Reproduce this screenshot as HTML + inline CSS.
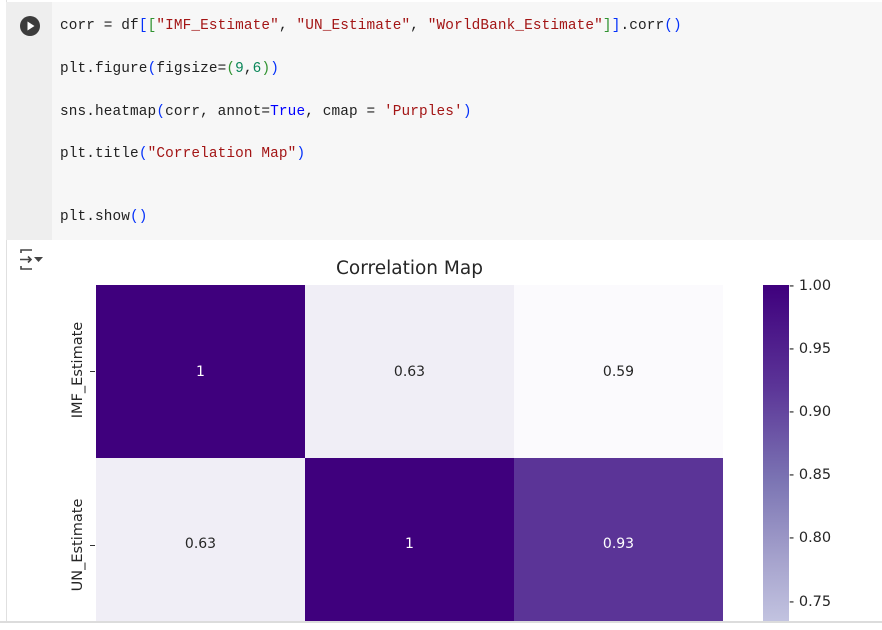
<!DOCTYPE html>
<html><head><style>
body{margin:0;width:882px;height:630px;background:#fff;position:relative;overflow:hidden;font-family:"Liberation Sans",sans-serif}
.code{position:absolute;left:6px;top:2px;width:876px;height:238px;background:#f7f7f7}
.gut{position:absolute;left:6px;top:2px;width:46px;height:238px;background:#eeeeee}
.ln{position:absolute;left:60px;font-family:"Liberation Mono",monospace;font-size:14.4px;letter-spacing:0.12px;color:#212121;white-space:pre}
.s{color:#a31515}.b{color:#0431fa}.g{color:#319331}.k{color:#0000ff}.n{color:#098658}
.a{position:absolute;font-family:"DejaVu Sans",sans-serif;font-size:14px;color:#262626}
.c{position:absolute;display:flex;align-items:center;justify-content:center;font-family:"DejaVu Sans",sans-serif;font-size:14px;box-sizing:border-box}
.r2{align-items:flex-start;padding-top:78px;line-height:17px}
</style></head><body>
<div style="position:absolute;left:6px;top:0;width:1px;height:622px;background:#e0e0e0"></div>
<div class="code"></div><div class="gut"></div>
<svg style="position:absolute;left:19px;top:15px" width="22" height="22"><circle cx="11" cy="11" r="10" fill="#3c3c3c"/><path d="M8.5 6.5 L15.5 11 L8.5 15.5Z" fill="#fff"/></svg>
<div class="ln" style="top:18px">corr = df<span class="b">[</span><span class="g">[</span><span class="s">"IMF_Estimate"</span>, <span class="s">"UN_Estimate"</span>, <span class="s">"WorldBank_Estimate"</span><span class="g">]</span><span class="b">]</span>.corr<span class="b">()</span></div>
<div class="ln" style="top:61px">plt.figure<span class="b">(</span>figsize=<span class="g">(</span><span class="n">9</span>,<span class="n">6</span><span class="g">)</span><span class="b">)</span></div>
<div class="ln" style="top:104px">sns.heatmap<span class="b">(</span>corr, annot=<span class="k">True</span>, cmap = <span class="s">'Purples'</span><span class="b">)</span></div>
<div class="ln" style="top:146px">plt.title<span class="b">(</span><span class="s">"Correlation Map"</span><span class="b">)</span></div>
<div class="ln" style="top:209px">plt.show<span class="b">()</span></div>
<svg style="position:absolute;left:19px;top:249px" width="26" height="22" fill="none" stroke="#444" stroke-width="1.6"><path d="M2 4 V1 H13 M2 17 V20 H13 M1 10.5 H12 M9 7.5 L12 10.5 L9 13.5"/><path d="M15 8 H24 L19.5 13Z" fill="#444" stroke="none"/></svg>
<div class="a" style="left:336px;top:258px;font-size:18.5px">Correlation Map</div>
<div class="c" style="left:96px;top:285px;width:209px;height:173px;background:#3f007d;color:#fff">1</div>
<div class="c" style="left:305px;top:285px;width:209px;height:173px;background:#f0eef6;color:#262626">0.63</div>
<div class="c" style="left:514px;top:285px;width:209px;height:173px;background:#fbfafd;color:#262626">0.59</div>
<div class="c r2" style="left:96px;top:458px;width:209px;height:163px;background:#f0eef6;color:#262626">0.63</div>
<div class="c r2" style="left:305px;top:458px;width:209px;height:163px;background:#3f007d;color:#fff">1</div>
<div class="c r2" style="left:514px;top:458px;width:209px;height:163px;background:#5b3497;color:#fff">0.93</div>
<div class="a" style="left:3px;top:362px;transform:rotate(-90deg);width:150px;text-align:center;font-size:14.5px">IMF_Estimate</div>
<div class="a" style="left:3px;top:537px;transform:rotate(-90deg);width:150px;text-align:center;font-size:14.5px">UN_Estimate</div>
<div style="position:absolute;left:90px;top:371px;width:5px;height:1px;background:#333"></div>
<div style="position:absolute;left:90px;top:545px;width:5px;height:1px;background:#333"></div>
<div style="position:absolute;left:763px;top:285px;width:26px;height:336px;background:linear-gradient(#3f007d,#5b3497 30%,#7b74b3 58%,#a6a3cd 82%,#c2c3e0)"></div>
<div class="a" style="left:789px;top:278px;line-height:16px;font-size:14.5px">- 1.00</div>
<div class="a" style="left:789px;top:341px;line-height:16px;font-size:14.5px">- 0.95</div>
<div class="a" style="left:789px;top:404px;line-height:16px;font-size:14.5px">- 0.90</div>
<div class="a" style="left:789px;top:467px;line-height:16px;font-size:14.5px">- 0.85</div>
<div class="a" style="left:789px;top:530px;line-height:16px;font-size:14.5px">- 0.80</div>
<div class="a" style="left:789px;top:594px;line-height:16px;font-size:14.5px">- 0.75</div>
<div style="position:absolute;left:0;top:621px;width:882px;height:2px;background:#dcdcdc"></div>
</body></html>
